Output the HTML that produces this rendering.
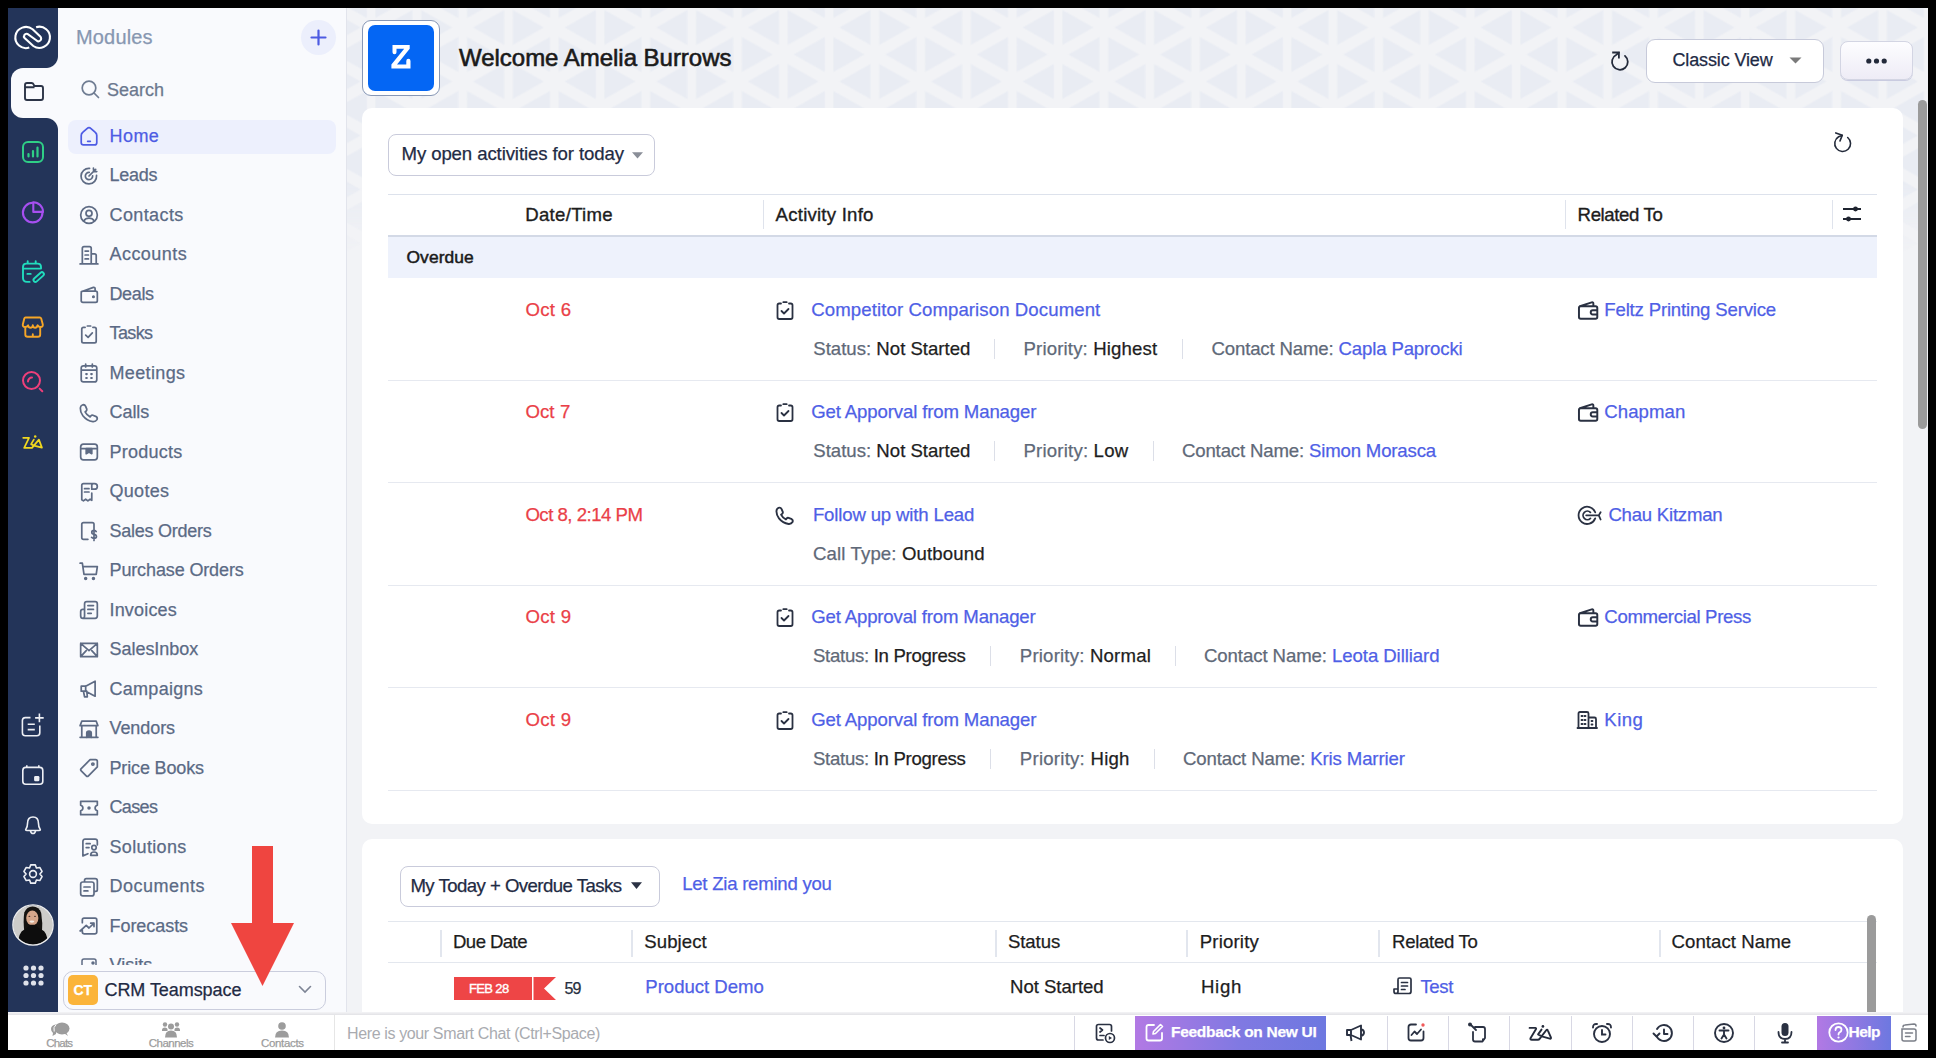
<!DOCTYPE html><html><head><meta charset="utf-8"><title>Zoho CRM</title><style>
*{box-sizing:border-box;margin:0;padding:0}
html,body{width:1937px;height:1059px;overflow:hidden;background:#fff;font-family:"Liberation Sans",sans-serif}
.a{position:absolute}
.t{position:absolute;white-space:nowrap;-webkit-text-stroke-width:0.25px}
svg{position:absolute;overflow:visible}
.med{-webkit-text-stroke:0.35px currentColor}
</style></head><body>
<div class="a" style="left:8px;top:8px;width:1920px;height:1042px;background:#f2f3f6"></div>
<svg style="left:347px;top:8px" width="1581" height="250">
<defs>
<pattern id="tri" x="-21.8" y="-7.5" width="91.6" height="54" patternUnits="userSpaceOnUse">
<path fill="#e9ecf3" d="M4.5 9.5 L4.5 44.5 L35.5 27 Z M41.5 -17.5 L41.5 17.5 L10.5 0 Z M41.5 36.5 L41.5 71.5 L10.5 54 Z M87.3 9.5 L87.3 44.5 L56.3 27 Z M50.3 -17.5 L50.3 17.5 L81.3 0 Z M50.3 36.5 L50.3 71.5 L81.3 54 Z"/>
</pattern>
<linearGradient id="fade" x1="0" y1="0" x2="0" y2="1"><stop offset="0" stop-color="#fff" stop-opacity="1"/><stop offset="0.7" stop-color="#fff" stop-opacity="1"/><stop offset="1" stop-color="#fff" stop-opacity="0"/></linearGradient>
<mask id="fm"><rect width="1581" height="250" fill="url(#fade)"/></mask>
</defs>
<rect width="1581" height="250" fill="url(#tri)" mask="url(#fm)"/>
</svg>
<div class="a" style="left:8px;top:8px;width:50px;height:1007px;background:#233459"></div>
<div class="a" style="left:11px;top:68px;width:47px;height:50px;background:#f9fafd;border-radius:12px 0 0 12px"></div>
<div class="a" style="left:46px;top:56px;width:12px;height:12px;background:radial-gradient(circle at 0 0,#233459 11.5px,#f9fafd 12.5px)"></div>
<div class="a" style="left:46px;top:118px;width:12px;height:12px;background:radial-gradient(circle at 0 100%,#233459 11.5px,#f9fafd 12.5px)"></div>
<svg style="left:12px;top:22px" width="44" height="30" viewBox="0 0 44 30">
<path d="M17.3 25.6 A10.6 10.6 0 1 1 20.6 7.3 L28.3 14.6 A2.6 2.6 0 0 1 24.6 18.5 L15.5 11.9 A2.6 2.6 0 0 0 12.6 16.0 L21.3 24.0 A10.6 10.6 0 1 0 24.1 5.2" fill="none" stroke="#fff" stroke-width="2.1" stroke-linecap="butt"/>
</svg>
<svg style="left:23px;top:81px" width="22" height="21" viewBox="0 0 22 21">
<path d="M2 4 Q2 2 4 2 L8.5 2 Q10 2 10.7 3.6 L11.3 5 L18 5 Q20 5 20 7 L20 17 Q20 19 18 19 L4 19 Q2 19 2 17 Z M2 6.2 L11.5 6.2" fill="none" stroke="#2c3447" stroke-width="1.9" stroke-linejoin="round"/>
</svg>
<svg style="left:22.0px;top:141.0px" width="22" height="22" viewBox="0 0 22 22"><rect x="1" y="1" width="20" height="20" rx="5" fill="none" stroke="#2fcf86" stroke-width="2"/><path d="M6.5 13 V15.5 M11 10 V15.5 M15.5 6.5 V15.5" stroke="#2fcf86" stroke-width="2.2" stroke-linecap="round"/></svg>
<svg style="left:20px;top:200px" width="26" height="26" viewBox="0 0 26 26"><circle cx="12.7" cy="12.6" r="9.8" fill="none" stroke="#a64ff0" stroke-width="2.1"/><path d="M13.3 2.3 V11.9 H23 A9.7 9.7 0 0 0 13.3 2.3 Z" fill="#233459" stroke="#a64ff0" stroke-width="2.1" stroke-linejoin="round"/></svg>
<svg style="left:19px;top:258px" width="28" height="28" viewBox="0 0 28 28"><path d="M10.6 23.9 H8 Q4 23.9 4 19.9 V9 Q4 5.6 7.4 5.6 H18.6 Q22 5.6 22 9 V10.6 M4 10.6 H22 M8.7 3.3 V5.6 M16.7 3.3 V5.6 M8.4 15.9 H11.7" fill="none" stroke="#21dcbd" stroke-width="1.9" stroke-linecap="round" stroke-linejoin="round"/><rect x="13.4" y="17.1" width="12.6" height="3.9" rx="1.95" transform="rotate(-42 19.7 19.05)" fill="none" stroke="#21dcbd" stroke-width="1.9"/></svg>
<svg style="left:19px;top:313px" width="28" height="28" viewBox="0 0 28 28"><path d="M6.5 4.5 H20.8 Q21.8 4.5 22.2 5.5 L23.8 11.5 Q24 13.8 21.6 14 Q19.5 14 18.6 12.3 Q18 14.8 16.1 14.8 Q14.2 14.8 13.8 12.3 Q13.4 14.8 11.5 14.8 Q9.6 14.8 9 12.3 Q8.2 14.2 6 14 Q3.6 13.8 3.8 11.5 L5.3 5.5 Q5.6 4.5 6.5 4.5 Z M6.3 14.6 V21.5 Q6.3 23.8 8.6 23.8 H19 Q21.2 23.8 21.2 21.5 V14.6 M13.8 23.8 V21.2" fill="none" stroke="#f6a627" stroke-width="1.9" stroke-linecap="round" stroke-linejoin="round"/></svg>
<svg style="left:22.0px;top:371.0px" width="22" height="22" viewBox="0 0 22 22"><circle cx="9.5" cy="9.5" r="8.5" fill="none" stroke="#ef3f7a" stroke-width="2"/><path d="M6 10.5 A4 4 0 0 1 10 6.5" fill="none" stroke="#ef3f7a" stroke-width="2" stroke-linecap="round"/><path d="M17.6 17.6 L20.3 20.3" stroke="#ef3f7a" stroke-width="2" stroke-linecap="round"/></svg>
<svg style="left:20px;top:432px" width="26" height="20" viewBox="0 0 26 20"><path d="M3.2 5.8 H9 L4.2 15.9 H12 L18.9 7.6 L21.9 15.6 L14 13.6 L11.1 12.1 L13.8 7.6" fill="none" stroke="#f0d71f" stroke-width="1.75" stroke-linejoin="round" stroke-linecap="round"/><circle cx="15.2" cy="4.5" r="1.25" fill="#f0d71f"/></svg>
<svg style="left:19px;top:710px" width="28" height="80" viewBox="0 0 28 80"><path d="M11.5 7.6 H6.4 Q3.4 7.6 3.4 10.6 V22.7 Q3.4 25.7 6.4 25.7 H17.8 Q20.8 25.7 20.8 22.7 V15.5 M8.7 14.3 H15.8 M8.7 19.6 H15.8 M20.4 3.6 V12.2 M16.1 7.9 H24.7 M6.8 57.4 H20.8 Q23.8 57.4 23.8 60.4 V71.3 Q23.8 74.3 20.8 74.3 H6.8 Q3.8 74.3 3.8 71.3 V60.4 Q3.8 57.4 6.8 57.4 Z M7.8 55.3 V58 M19.8 55.3 V58" fill="none" stroke="#eef0f5" stroke-width="1.6" stroke-linecap="butt" stroke-linejoin="round"/><rect x="15.1" y="66" width="5.3" height="5.3" rx="1.3" fill="#eef0f5"/></svg>
<svg style="left:22.0px;top:814.0px" width="22" height="22" viewBox="0 0 22 22"><path d="M4 15 Q5.5 13 5.5 9.5 Q5.5 3 11 3 Q16.5 3 16.5 9.5 Q16.5 13 18 15 Q19 16.5 17 16.5 H5 Q3 16.5 4 15 Z M8.5 17 Q9 19.5 11 19.5 Q13 19.5 13.5 17" fill="none" stroke="#eef0f5" stroke-width="1.6" stroke-linejoin="round"/></svg>
<svg style="left:20px;top:861.4px" width="26" height="26" viewBox="0 0 26 26"><path d="M9.55 7.02 L10.73 3.88 L15.27 3.88 L16.45 7.02 L16.45 7.02 L19.76 6.47 L22.04 10.41 L19.90 13.00 L19.90 13.00 L22.04 15.59 L19.76 19.53 L16.45 18.98 L16.45 18.98 L15.27 22.12 L10.73 22.12 L9.55 18.98 L9.55 18.98 L6.24 19.53 L3.96 15.59 L6.10 13.00 L6.10 13.00 L3.96 10.41 L6.24 6.47 L9.55 7.02Z" fill="none" stroke="#eef0f5" stroke-width="1.6" stroke-linejoin="round"/><circle cx="13" cy="13" r="3.4" fill="none" stroke="#eef0f5" stroke-width="1.6"/></svg>
<svg style="left:10px;top:902px" width="46" height="46" viewBox="0 0 46 46"><defs><clipPath id="av"><circle cx="23" cy="23" r="19.8"/></clipPath></defs><g clip-path="url(#av)"><rect width="46" height="46" fill="#cdccc9"/><path d="M14.6 31 Q12.8 20 14.3 10.5 Q16.8 4.4 22.6 4.5 Q29.3 4.8 31.2 11 Q32.8 20 32 31 Z" fill="#141210"/><ellipse cx="22.3" cy="16" rx="6.1" ry="7.6" fill="#d6a68a"/><path d="M26 8 Q29.5 10 29.2 16 L31 16 Q31 8 26 6.5 Z" fill="#141210"/><ellipse cx="21.9" cy="19.6" rx="2.4" ry="1.1" fill="#f3ece6"/><ellipse cx="19.4" cy="14.3" rx="1" ry="0.6" fill="#4a342a"/><ellipse cx="25" cy="14.3" rx="1" ry="0.6" fill="#4a342a"/><path d="M7.5 46 Q8 30.5 14 27.8 Q18.5 26 19.2 22.8 H25.8 Q27.3 26 31.5 27.4 Q38 29.5 38.5 46 Z" fill="#0d0d0d"/></g><circle cx="23" cy="23" r="20.1" fill="none" stroke="#eeeeee" stroke-width="1.4"/></svg>
<svg style="left:22.5px;top:964.5px" width="21" height="21" viewBox="0 0 21 21"><circle cx="3.0" cy="3.0" r="2.6" fill="#dfe2ea"/><circle cx="10.5" cy="3.0" r="2.6" fill="#dfe2ea"/><circle cx="18.0" cy="3.0" r="2.6" fill="#dfe2ea"/><circle cx="3.0" cy="10.5" r="2.6" fill="#dfe2ea"/><circle cx="10.5" cy="10.5" r="2.6" fill="#dfe2ea"/><circle cx="18.0" cy="10.5" r="2.6" fill="#dfe2ea"/><circle cx="3.0" cy="18.0" r="2.6" fill="#dfe2ea"/><circle cx="10.5" cy="18.0" r="2.6" fill="#dfe2ea"/><circle cx="18.0" cy="18.0" r="2.6" fill="#dfe2ea"/></svg>
<div class="a" style="left:58px;top:8px;width:289px;height:1007px;background:#f9fafd;border-right:1px solid #e2e4ec"></div>
<div class="t " style="left:76px;top:25.07px;font-size:20px;line-height:24px;color:#8797b1;font-weight:400;letter-spacing:0.167px;">Modules</div>
<div class="a" style="left:301px;top:20px;width:35px;height:35px;border-radius:50%;background:#eceffc"></div>
<svg style="left:310px;top:29px" width="17" height="17" viewBox="0 0 17 17"><path d="M8.5 1.5 V15.5 M1.5 8.5 H15.5" stroke="#4d5be2" stroke-width="2.2" stroke-linecap="round"/></svg>
<svg style="left:81px;top:80px" width="19" height="19" viewBox="0 0 19 19"><circle cx="8" cy="8" r="6.8" fill="none" stroke="#6f7c92" stroke-width="1.7"/><path d="M13 13 L17.5 17.5" stroke="#6f7c92" stroke-width="1.7" stroke-linecap="round"/></svg>
<div class="t " style="left:107px;top:78.76px;font-size:18px;line-height:22px;color:#6b788e;font-weight:400;letter-spacing:0.000px;">Search</div>
<div class="a" style="left:68px;top:120px;width:268px;height:34px;border-radius:8px;background:#edf0fd"></div>
<svg style="left:79px;top:126.0px" width="20" height="20" viewBox="0 0 18 18"><g fill="none" stroke="#4e5ce4" stroke-width="1.55" stroke-linecap="round" stroke-linejoin="round"><path d="M2 8.5 Q2 6.8 3.3 5.8 L7.2 2.3 Q9 0.8 10.8 2.3 L14.7 5.8 Q16 6.8 16 8.5 V15 Q16 17 14 17 H4 Q2 17 2 15 Z M7.8 13.8 H10.2"/></g></svg>
<div class="t " style="left:109.5px;top:124.76px;font-size:18px;line-height:22px;color:#4e5ce4;font-weight:400;letter-spacing:0.433px;">Home</div>
<svg style="left:79px;top:165.5px" width="20" height="20" viewBox="0 0 18 18"><g fill="none" stroke="#5e6b84" stroke-width="1.55" stroke-linecap="round" stroke-linejoin="round"><path d="M15.8 8.5 A7 7 0 1 1 9.5 2.2 M12.3 8.8 A3.3 3.3 0 1 1 9.2 5.7 M9 9 L15 3 M13 2 L13.2 4.8 L16 5"/></g></svg>
<div class="t " style="left:109.5px;top:164.26px;font-size:18px;line-height:22px;color:#5b6a85;font-weight:400;letter-spacing:-0.250px;">Leads</div>
<svg style="left:79px;top:205.0px" width="20" height="20" viewBox="0 0 18 18"><g fill="none" stroke="#5e6b84" stroke-width="1.55" stroke-linecap="round" stroke-linejoin="round"><circle cx="9" cy="9" r="7.5"/><circle cx="9" cy="7.5" r="2.7"/><path d="M4.2 14.3 Q6 11.8 9 11.8 Q12 11.8 13.8 14.3"/></g></svg>
<div class="t " style="left:109.5px;top:203.76px;font-size:18px;line-height:22px;color:#5b6a85;font-weight:400;letter-spacing:0.400px;">Contacts</div>
<svg style="left:79px;top:244.5px" width="20" height="20" viewBox="0 0 18 18"><g fill="none" stroke="#5e6b84" stroke-width="1.55" stroke-linecap="round" stroke-linejoin="round"><path d="M1 17 H17 M3 17 V3 Q3 1.5 4.5 1.5 H9.5 Q11 1.5 11 3 V17 M11 8 H14 Q15.5 8 15.5 9.5 V17 M5.5 5.5 H8.5 M5.5 9 H8.5 M5.5 12.5 H8.5"/></g></svg>
<div class="t " style="left:109.5px;top:243.26px;font-size:18px;line-height:22px;color:#5b6a85;font-weight:400;letter-spacing:0.443px;">Accounts</div>
<svg style="left:79px;top:284.0px" width="20" height="20" viewBox="0 0 18 18"><g fill="none" stroke="#5e6b84" stroke-width="1.55" stroke-linecap="round" stroke-linejoin="round"><path d="M2 7 L13 3 Q14.5 2.7 14.5 4.3 V6.5 M3.5 6.5 H15 Q16.5 6.5 16.5 8 V15 Q16.5 16.5 15 16.5 H3.5 Q2 16.5 2 15 V8 Q2 6.5 3.5 6.5 Z"/><circle cx="13" cy="11.5" r="0.6" fill="#5e6b84"/></g></svg>
<div class="t " style="left:109.5px;top:282.76px;font-size:18px;line-height:22px;color:#5b6a85;font-weight:400;letter-spacing:-0.375px;">Deals</div>
<svg style="left:79px;top:323.5px" width="20" height="20" viewBox="0 0 18 18"><g fill="none" stroke="#5e6b84" stroke-width="1.55" stroke-linecap="round" stroke-linejoin="round"><path d="M5.5 3 H4 Q2.5 3 2.5 4.5 V15.5 Q2.5 17 4 17 H14 Q15.5 17 15.5 15.5 V4.5 Q15.5 3 14 3 H12.5 M7.5 1.8 H10.5 M6 10 L8.2 12 L12 8"/></g></svg>
<div class="t " style="left:109.5px;top:322.26px;font-size:18px;line-height:22px;color:#5b6a85;font-weight:400;letter-spacing:-0.625px;">Tasks</div>
<svg style="left:79px;top:363.0px" width="20" height="20" viewBox="0 0 18 18"><g fill="none" stroke="#5e6b84" stroke-width="1.55" stroke-linecap="round" stroke-linejoin="round"><path d="M4 2.5 H14 Q16 2.5 16 4.5 V15 Q16 17 14 17 H4 Q2 17 2 15 V4.5 Q2 2.5 4 2.5 Z M2 6.5 H16 M6 1 V3.5 M12 1 V3.5"/><path d="M6.5 10 H7 M11 10 H11.5 M6.5 13.5 H7 M11 13.5 H11.5" stroke-width="2"/></g></svg>
<div class="t " style="left:109.5px;top:361.76px;font-size:18px;line-height:22px;color:#5b6a85;font-weight:400;letter-spacing:0.357px;">Meetings</div>
<svg style="left:79px;top:402.5px" width="20" height="20" viewBox="0 0 18 18"><g fill="none" stroke="#5e6b84" stroke-width="1.55" stroke-linecap="round" stroke-linejoin="round"><path d="M3 1.8 Q5 1 6 3 L7 5.5 Q7.3 6.5 6.5 7.2 L5.5 8 Q7 11 10 12.5 L10.8 11.5 Q11.5 10.7 12.5 11 L15 12 Q17 13 16.2 15 Q15 17 12.5 16.8 Q7 16 3.5 11.5 Q1 8 1.2 4.5 Q1.3 2.5 3 1.8 Z"/></g></svg>
<div class="t " style="left:109.5px;top:401.26px;font-size:18px;line-height:22px;color:#5b6a85;font-weight:400;letter-spacing:-0.050px;">Calls</div>
<svg style="left:79px;top:442.0px" width="20" height="20" viewBox="0 0 18 18"><g fill="none" stroke="#5e6b84" stroke-width="1.55" stroke-linecap="round" stroke-linejoin="round"><path d="M4 2 H14 Q16.5 2 16.5 4.5 V13.5 Q16.5 16 14 16 H4 Q1.5 16 1.5 13.5 V4.5 Q1.5 2 4 2 Z M1.5 6 H16.5"/><path d="M6.5 6 V10.5 L9 9 L11.5 10.5 V6 Z" fill="#5e6b84"/></g></svg>
<div class="t " style="left:109.5px;top:440.76px;font-size:18px;line-height:22px;color:#5b6a85;font-weight:400;letter-spacing:0.257px;">Products</div>
<svg style="left:79px;top:481.5px" width="20" height="20" viewBox="0 0 18 18"><g fill="none" stroke="#5e6b84" stroke-width="1.55" stroke-linecap="round" stroke-linejoin="round"><path d="M11.5 10 V16.5 L10 15.5 L8 17 L6 15.5 L4 17 L2.5 16 V3 Q2.5 1.5 4 1.5 H14 Q16.5 1.5 16.5 4 Q16.5 6.5 14 6.5 H11.5 V3 Q11.5 1.5 13 1.5 M5 6 H9 M5 9 H9"/></g></svg>
<div class="t " style="left:109.5px;top:480.26px;font-size:18px;line-height:22px;color:#5b6a85;font-weight:400;letter-spacing:0.300px;">Quotes</div>
<svg style="left:79px;top:521.0px" width="20" height="20" viewBox="0 0 18 18"><g fill="none" stroke="#5e6b84" stroke-width="1.55" stroke-linecap="round" stroke-linejoin="round"><path d="M8 16.5 H4 Q2.5 16.5 2.5 15 V3 Q2.5 1.5 4 1.5 H12 Q13.5 1.5 13.5 3 V7.5 M15.5 9.5 Q15 8.5 13.5 8.5 Q11.5 8.5 11.5 10.2 Q11.5 11.8 13.5 12 Q15.7 12.3 15.7 14 Q15.7 15.7 13.5 15.7 Q12 15.7 11.3 14.7 M13.5 7 V17.5"/></g></svg>
<div class="t " style="left:109.5px;top:519.76px;font-size:18px;line-height:22px;color:#5b6a85;font-weight:400;letter-spacing:-0.264px;">Sales Orders</div>
<svg style="left:79px;top:560.5px" width="20" height="20" viewBox="0 0 18 18"><g fill="none" stroke="#5e6b84" stroke-width="1.55" stroke-linecap="round" stroke-linejoin="round"><path d="M1 2 H3 L4.5 12 H15.5 L16.5 5 H3.8"/><circle cx="6" cy="15.8" r="0.8" fill="#5e6b84"/><circle cx="13" cy="15.8" r="0.8" fill="#5e6b84"/></g></svg>
<div class="t " style="left:109.5px;top:559.26px;font-size:18px;line-height:22px;color:#5b6a85;font-weight:400;letter-spacing:-0.129px;">Purchase Orders</div>
<svg style="left:79px;top:600.0px" width="20" height="20" viewBox="0 0 18 18"><g fill="none" stroke="#5e6b84" stroke-width="1.55" stroke-linecap="round" stroke-linejoin="round"><path d="M5 8.5 V3.5 Q5 1.5 7 1.5 H14.5 Q16.5 1.5 16.5 3.5 V14.5 Q16.5 16.5 14.5 16.5 H3.5 Q1.5 16.5 1.5 14.5 V10.5 Q1.5 8.5 3.5 8.5 H5 V14.5 Q5 16.5 3.5 16.5 M8 5 H13 M8 8.5 H13 M8 12 H11"/></g></svg>
<div class="t " style="left:109.5px;top:598.76px;font-size:18px;line-height:22px;color:#5b6a85;font-weight:400;letter-spacing:0.171px;">Invoices</div>
<svg style="left:79px;top:639.5px" width="20" height="20" viewBox="0 0 18 18"><g fill="none" stroke="#5e6b84" stroke-width="1.55" stroke-linecap="round" stroke-linejoin="round"><path d="M1.5 3 H16.5 V15 H1.5 Z M1.5 3 L9 9.5 L16.5 3 M1.5 15 L6.5 9.5 M16.5 15 L11.5 9.5"/></g></svg>
<div class="t " style="left:109.5px;top:638.26px;font-size:18px;line-height:22px;color:#5b6a85;font-weight:400;letter-spacing:-0.033px;">SalesInbox</div>
<svg style="left:79px;top:679.0px" width="20" height="20" viewBox="0 0 18 18"><g fill="none" stroke="#5e6b84" stroke-width="1.55" stroke-linecap="round" stroke-linejoin="round"><path d="M2 6.5 H6 L14.5 2 V15.5 L6 11 H2 Z M6 6.5 V11 M4 11 L5 16 H7.5 L7 11"/></g></svg>
<div class="t " style="left:109.5px;top:677.76px;font-size:18px;line-height:22px;color:#5b6a85;font-weight:400;letter-spacing:0.287px;">Campaigns</div>
<svg style="left:79px;top:718.5px" width="20" height="20" viewBox="0 0 18 18"><g fill="none" stroke="#5e6b84" stroke-width="1.55" stroke-linecap="round" stroke-linejoin="round"><path d="M2.5 2 H15.5 L17 6 H1 Z M2.5 6 V16.5 H15.5 V6 M1 16.5 H17"/><path d="M7 16.5 V12.5 Q7 11 9 11 Q11 11 11 12.5 V16.5" fill="#5e6b84"/></g></svg>
<div class="t " style="left:109.5px;top:717.26px;font-size:18px;line-height:22px;color:#5b6a85;font-weight:400;letter-spacing:-0.083px;">Vendors</div>
<svg style="left:79px;top:758.0px" width="20" height="20" viewBox="0 0 18 18"><g fill="none" stroke="#5e6b84" stroke-width="1.55" stroke-linecap="round" stroke-linejoin="round"><path d="M10 1.5 H15 Q16.5 1.5 16.5 3 V8 L8.5 16 Q7.5 17 6.5 16 L2 11.5 Q1 10.5 2 9.5 Z"/><circle cx="12.5" cy="5.5" r="1"/></g></svg>
<div class="t " style="left:109.5px;top:756.76px;font-size:18px;line-height:22px;color:#5b6a85;font-weight:400;letter-spacing:-0.150px;">Price Books</div>
<svg style="left:79px;top:797.5px" width="20" height="20" viewBox="0 0 18 18"><g fill="none" stroke="#5e6b84" stroke-width="1.55" stroke-linecap="round" stroke-linejoin="round"><path d="M1.5 3 H16.5 V6.5 Q14.5 7 14.5 9 Q14.5 11 16.5 11.5 V15 H1.5 V11.5 Q3.5 11 3.5 9 Q3.5 7 1.5 6.5 Z"/><circle cx="9" cy="9" r="0.8" fill="#5e6b84"/></g></svg>
<div class="t " style="left:109.5px;top:796.26px;font-size:18px;line-height:22px;color:#5b6a85;font-weight:400;letter-spacing:-0.650px;">Cases</div>
<svg style="left:79px;top:837.0px" width="20" height="20" viewBox="0 0 18 18"><g fill="none" stroke="#5e6b84" stroke-width="1.55" stroke-linecap="round" stroke-linejoin="round"><path d="M8 15 L3.5 17 V4 Q3.5 2 5.5 2 H14.5 Q16.5 2 16.5 4 V7 M6.5 6 H10 M6.5 9.5 H9"/><circle cx="13.5" cy="9.5" r="2"/><path d="M10.5 16.5 Q10.5 13.5 13.5 13.5 Q16.5 13.5 16.5 16.5 Z"/></g></svg>
<div class="t " style="left:109.5px;top:835.76px;font-size:18px;line-height:22px;color:#5b6a85;font-weight:400;letter-spacing:0.338px;">Solutions</div>
<svg style="left:79px;top:876.5px" width="20" height="20" viewBox="0 0 18 18"><g fill="none" stroke="#5e6b84" stroke-width="1.55" stroke-linecap="round" stroke-linejoin="round"><path d="M5 4.5 V3 Q5 1.5 6.5 1.5 H14.5 Q16.5 1.5 16.5 3.5 V11.5 Q16.5 13 15 13 H13.5 M3.5 4.5 H11.5 Q13.5 4.5 13.5 6.5 V15 Q13.5 17 11.5 17 H3.5 Q1.5 17 1.5 15 V6.5 Q1.5 4.5 3.5 4.5 Z M4.5 9 H10 M4.5 12.5 H8"/></g></svg>
<div class="t " style="left:109.5px;top:875.26px;font-size:18px;line-height:22px;color:#5b6a85;font-weight:400;letter-spacing:0.488px;">Documents</div>
<svg style="left:79px;top:916.0px" width="20" height="20" viewBox="0 0 18 18"><g fill="none" stroke="#5e6b84" stroke-width="1.55" stroke-linecap="round" stroke-linejoin="round"><path d="M3 6 V3.5 Q3 2 4.5 2 H14.5 Q16 2 16 3.5 V14.5 Q16 16 14.5 16 H4.5 Q3 16 3 14.5 V13 M1 13.5 L6.5 8.5 L9 10.8 L13.5 6.5 M10.5 6.5 H13.5 V9.5"/></g></svg>
<div class="t " style="left:109.5px;top:914.76px;font-size:18px;line-height:22px;color:#5b6a85;font-weight:400;letter-spacing:-0.050px;">Forecasts</div>
<div class="a" style="left:58px;top:940px;width:288px;height:25px;overflow:hidden">
<svg style="left:22px;top:16.5px" width="18" height="18" viewBox="0 0 18 18"><g fill="none" stroke="#5e6b84" stroke-width="1.5"><path d="M2 15 V4 Q2 2 4 2 H14 Q16 2 16 4 V15"/><circle cx="13" cy="6" r="1" fill="#5e6b84"/></g></svg>
<div class="t" style="left:51.5px;top:14.46px;font-size:18px;line-height:22px;color:#5b6a85">Visits</div>
</div>
<div class="a" style="left:63px;top:971px;width:263px;height:39px;border:1px solid #cacddd;border-radius:10px;background:#f9fafd"></div>
<div class="a" style="left:68px;top:975px;width:30px;height:30px;border-radius:5px;background:#fbb43a"></div>
<div class="t " style="left:73.5px;top:981.65px;font-size:14px;line-height:17px;color:#fff;font-weight:700;">CT</div>
<div class="t " style="left:104.5px;top:978.76px;font-size:18px;line-height:22px;color:#1f2a44;font-weight:400;letter-spacing:-0.067px;">CRM Teamspace</div>
<svg style="left:298px;top:985px" width="14" height="9" viewBox="0 0 14 9"><path d="M1.5 1.5 L7 7 L12.5 1.5" fill="none" stroke="#7d8495" stroke-width="1.6" stroke-linecap="round"/></svg>
<svg style="left:231px;top:846px" width="63" height="140" viewBox="0 0 63 140"><path d="M21 0 H42 V77 H63 L31.5 140 L0 77 H21 Z" fill="#ef4540"/></svg>
<div class="a" style="left:362px;top:20px;width:78px;height:76px;border:1px solid #8797b5;border-radius:9px;background:#fff"></div>
<div class="a" style="left:368px;top:25px;width:66px;height:66px;border-radius:7px;background:#0466f4"></div>
<svg style="left:390px;top:44px" width="22" height="26" viewBox="0 0 22 26"><path d="M2.5 1 H19.7 V4.8 L7 20.6 H16.3 V16.9 A2.1 2.1 0 0 1 20.5 16.9 V24.5 H1.4 V20.6 L14.2 4.8 H6.5 V8.2 A2 2 0 0 1 2.5 8.2 Z" fill="#fff"/></svg>
<div class="t " style="left:459px;top:43.18px;font-size:24px;line-height:29px;color:#1a1a1a;font-weight:400;letter-spacing:-0.024px;-webkit-text-stroke:0.6px #1a1a1a;">Welcome Amelia Burrows</div>
<svg style="left:1605px;top:46px" width="30" height="30" viewBox="0 0 30 30"><path d="M19.98 9.85 A7.9 7.9 0 1 1 11.4 8.8 L13.9 6.6" fill="none" stroke="#232a3a" stroke-width="1.8" stroke-linecap="round"/><path d="M7.2 6.5 H13.9 V12.6" fill="none" stroke="#232a3a" stroke-width="1.8" stroke-linecap="butt" stroke-linejoin="miter"/></svg>
<div class="a" style="left:1646px;top:39px;width:178px;height:44px;border:1px solid #c7cada;border-radius:9px;background:#fff"></div>
<div class="t " style="left:1672.5px;top:48.76px;font-size:18px;line-height:22px;color:#1e2a45;font-weight:400;letter-spacing:-0.136px;">Classic View</div>
<svg style="left:1789px;top:57px" width="13" height="7" viewBox="0 0 13 7"><path d="M0.5 0.5 H12.5 L6.5 6.5 Z" fill="#7a7a7a"/></svg>
<div class="a" style="left:1840px;top:41px;width:73px;height:39px;border:1px solid #d3d5e3;border-radius:8px;background:linear-gradient(#fdfdff,#eeecf6);box-shadow:0 1px 0 #c9cbe0"></div>
<svg style="left:1866px;top:58px" width="21" height="6" viewBox="0 0 21 6"><circle cx="2.8" cy="3" r="2.6" fill="#232a3a"/><circle cx="10.5" cy="3" r="2.6" fill="#232a3a"/><circle cx="18.2" cy="3" r="2.6" fill="#232a3a"/></svg>
<div class="a" style="left:1918px;top:100px;width:9px;height:329px;border-radius:5px;background:#9b9b9b"></div>
<div class="a" style="left:362px;top:108px;width:1541px;height:716px;border-radius:10px;background:#fff"></div>
<div class="a" style="left:388px;top:134px;width:267px;height:42px;border:1px solid #c9cbdb;border-radius:8px;background:#fff"></div>
<div class="t " style="left:401.5px;top:143.16px;font-size:18.6px;line-height:22px;color:#1f2b44;font-weight:400;letter-spacing:-0.104px;">My open activities for today</div>
<svg style="left:632px;top:152px" width="11" height="7" viewBox="0 0 11 7"><path d="M0 0.2 H11 L5.5 6.4 Z" fill="#8a8e98"/></svg>
<svg style="left:1827px;top:127px" width="30" height="30" viewBox="0 0 30 30"><path d="M20.7 10.5 A7.9 7.9 0 1 1 11.6 9.8 L15.1 8.4" fill="none" stroke="#232a3a" stroke-width="1.6" stroke-linecap="round"/><path d="M8.8 5.9 L15.3 8.2 L13.0 13.9" fill="none" stroke="#232a3a" stroke-width="1.6" stroke-linecap="round" stroke-linejoin="round"/></svg>
<div class="a" style="left:388px;top:194px;width:1489px;height:1px;background:#dde2ec"></div>
<div class="a" style="left:388px;top:235px;width:1489px;height:2px;background:#d3d9e6"></div>
<div class="a" style="left:763px;top:200px;width:1px;height:29px;background:#dfe3ec"></div>
<div class="a" style="left:1565px;top:200px;width:1px;height:29px;background:#dfe3ec"></div>
<div class="a" style="left:1832px;top:200px;width:1px;height:29px;background:#dfe3ec"></div>
<div class="t med" style="left:525.2px;top:203.56px;font-size:18.6px;line-height:22px;color:#1d1d1d;font-weight:400;letter-spacing:0.300px;">Date/Time</div>
<div class="t med" style="left:775.6px;top:203.56px;font-size:18.6px;line-height:22px;color:#1d1d1d;font-weight:400;letter-spacing:0.225px;">Activity Info</div>
<div class="t med" style="left:1577.6px;top:203.56px;font-size:18.6px;line-height:22px;color:#1d1d1d;font-weight:400;letter-spacing:-0.378px;">Related To</div>
<svg style="left:1842px;top:206px" width="20" height="17" viewBox="0 0 20 17"><path d="M1 3 H19 M1 13 H19" stroke="#1f2430" stroke-width="1.9"/><circle cx="13.5" cy="3" r="2.4" fill="#1f2430"/><circle cx="6.5" cy="13" r="2.4" fill="#1f2430"/></svg>
<div class="a" style="left:388px;top:237px;width:1489px;height:41px;background:#eef2fc"></div>
<div class="t " style="left:406.5px;top:247.47px;font-size:17.4px;line-height:21px;color:#1a1a1a;font-weight:400;letter-spacing:0.083px;-webkit-text-stroke:0.5px #1a1a1a;">Overdue</div>
<div class="t " style="left:525.4px;top:299.16px;font-size:18.6px;line-height:22px;color:#ea3f48;font-weight:400;letter-spacing:0.325px;">Oct 6</div>
<svg style="left:776px;top:301px" width="20" height="20" viewBox="0 0 20 20"><path d="M5 2.5 H3.2 Q1.5 2.5 1.5 4.2 V16.3 Q1.5 18 3.2 18 H14.8 Q16.5 18 16.5 16.3 V4.2 Q16.5 2.5 14.8 2.5 H13 M7.3 1.2 H10.7 M5.5 10 L8 12.5 L12.5 8" fill="none" stroke="#2a3142" stroke-width="1.8" stroke-linecap="round" stroke-linejoin="round"/></svg>
<div class="t " style="left:811.3px;top:299.16px;font-size:18.6px;line-height:22px;color:#4f5fe6;font-weight:400;letter-spacing:0.093px;">Competitor Comparison Document</div>
<div class="t " style="left:813.3px;top:337.56px;font-size:18.6px;line-height:22px;color:#1d1d1d;font-weight:400;letter-spacing:0.000px;"><span style="color:#5f6978">Status:</span> <span style="color:#1e1e1e">Not Started</span></div>
<div class="a" style="left:994px;top:339px;width:1px;height:20px;background:#dcdfe8"></div>
<div class="t " style="left:1023.5px;top:337.56px;font-size:18.6px;line-height:22px;color:#1d1d1d;font-weight:400;letter-spacing:0.156px;"><span style="color:#5f6978">Priority:</span> <span style="color:#1e1e1e">Highest</span></div>
<div class="a" style="left:1182px;top:339px;width:1px;height:20px;background:#dcdfe8"></div>
<div class="t " style="left:1211.5px;top:337.56px;font-size:18.6px;line-height:22px;color:#1d1d1d;font-weight:400;letter-spacing:-0.152px;"><span style="color:#5f6978">Contact Name:</span> <span style="color:#4f5fe6">Capla Paprocki</span></div>
<svg style="left:1577px;top:299.5px" width="24" height="24" viewBox="0 0 22 22"><path d="M2 6 L13.5 2.2 Q15 1.8 15 3.4 V5.8 M3.4 5.8 H17 Q18.6 5.8 18.6 7.4 V15.6 Q18.6 17.2 17 17.2 H3.4 Q1.8 17.2 1.8 15.6 V7.4 Q1.8 5.8 3.4 5.8 Z M18.6 9.3 H14.5 Q12.6 9.3 12.6 11.3 Q12.6 13.3 14.5 13.3 H18.6" fill="none" stroke="#2a3142" stroke-width="1.8" stroke-linejoin="round"/></svg>
<div class="t " style="left:1604.3px;top:299.16px;font-size:18.6px;line-height:22px;color:#4f5fe6;font-weight:400;letter-spacing:-0.181px;">Feltz Printing Service</div>
<div class="a" style="left:388px;top:380px;width:1489px;height:1px;background:#e6e9f0"></div>
<div class="t " style="left:525.4px;top:401.16px;font-size:18.6px;line-height:22px;color:#ea3f48;font-weight:400;letter-spacing:0.100px;">Oct 7</div>
<svg style="left:776px;top:403px" width="20" height="20" viewBox="0 0 20 20"><path d="M5 2.5 H3.2 Q1.5 2.5 1.5 4.2 V16.3 Q1.5 18 3.2 18 H14.8 Q16.5 18 16.5 16.3 V4.2 Q16.5 2.5 14.8 2.5 H13 M7.3 1.2 H10.7 M5.5 10 L8 12.5 L12.5 8" fill="none" stroke="#2a3142" stroke-width="1.8" stroke-linecap="round" stroke-linejoin="round"/></svg>
<div class="t " style="left:811.3px;top:401.16px;font-size:18.6px;line-height:22px;color:#4f5fe6;font-weight:400;letter-spacing:-0.138px;">Get Apporval from Manager</div>
<div class="t " style="left:813.3px;top:439.56px;font-size:18.6px;line-height:22px;color:#1d1d1d;font-weight:400;letter-spacing:0.000px;"><span style="color:#5f6978">Status:</span> <span style="color:#1e1e1e">Not Started</span></div>
<div class="a" style="left:994px;top:441px;width:1px;height:20px;background:#dcdfe8"></div>
<div class="t " style="left:1023.5px;top:439.56px;font-size:18.6px;line-height:22px;color:#1d1d1d;font-weight:400;letter-spacing:0.192px;"><span style="color:#5f6978">Priority:</span> <span style="color:#1e1e1e">Low</span></div>
<div class="a" style="left:1153px;top:441px;width:1px;height:20px;background:#dcdfe8"></div>
<div class="t " style="left:1182px;top:439.56px;font-size:18.6px;line-height:22px;color:#1d1d1d;font-weight:400;letter-spacing:-0.162px;"><span style="color:#5f6978">Contact Name:</span> <span style="color:#4f5fe6">Simon Morasca</span></div>
<svg style="left:1577px;top:401.5px" width="24" height="24" viewBox="0 0 22 22"><path d="M2 6 L13.5 2.2 Q15 1.8 15 3.4 V5.8 M3.4 5.8 H17 Q18.6 5.8 18.6 7.4 V15.6 Q18.6 17.2 17 17.2 H3.4 Q1.8 17.2 1.8 15.6 V7.4 Q1.8 5.8 3.4 5.8 Z M18.6 9.3 H14.5 Q12.6 9.3 12.6 11.3 Q12.6 13.3 14.5 13.3 H18.6" fill="none" stroke="#2a3142" stroke-width="1.8" stroke-linejoin="round"/></svg>
<div class="t " style="left:1604.3px;top:401.16px;font-size:18.6px;line-height:22px;color:#4f5fe6;font-weight:400;letter-spacing:0.050px;">Chapman</div>
<div class="a" style="left:388px;top:482px;width:1489px;height:1px;background:#e6e9f0"></div>
<div class="t " style="left:525.4px;top:504.16px;font-size:18.6px;line-height:22px;color:#ea3f48;font-weight:400;letter-spacing:-0.492px;">Oct 8, 2:14 PM</div>
<svg style="left:775px;top:505.5px" width="21" height="21" viewBox="0 0 20 20"><path d="M3.3 1.8 Q5.3 1 6.3 3 L7.4 5.6 Q7.7 6.6 6.9 7.3 L5.8 8.2 Q7.3 11.3 10.4 12.8 L11.2 11.8 Q11.9 11 12.9 11.3 L15.5 12.3 Q17.5 13.3 16.7 15.3 Q15.5 17.3 13 17.1 Q7.3 16.3 3.8 11.8 Q1.2 8.3 1.4 4.7 Q1.5 2.6 3.3 1.8 Z" fill="none" stroke="#2a3142" stroke-width="1.8" stroke-linejoin="round"/></svg>
<div class="t " style="left:812.9px;top:504.16px;font-size:18.6px;line-height:22px;color:#4f5fe6;font-weight:400;letter-spacing:-0.161px;">Follow up with Lead</div>
<div class="t " style="left:813px;top:542.56px;font-size:18.6px;line-height:22px;color:#1d1d1d;font-weight:400;letter-spacing:0.128px;"><span style="color:#5f6978">Call Type:</span> <span style="color:#1e1e1e">Outbound</span></div>
<svg style="left:1572px;top:500px" width="36" height="30" viewBox="0 0 36 30"><path d="M23.2 12.3 A8.6 8.6 0 1 0 23.2 18.4 M18.4 12.3 A4.3 4.3 0 1 0 18.4 18.4 M14.2 15.35 H26.6 M28.6 12.2 L26.8 15.35 L28.6 19.5" fill="none" stroke="#2a3142" stroke-width="1.8" stroke-linecap="round" stroke-linejoin="round"/></svg>
<div class="t " style="left:1608.4px;top:504.16px;font-size:18.6px;line-height:22px;color:#4f5fe6;font-weight:400;letter-spacing:-0.236px;">Chau Kitzman</div>
<div class="a" style="left:388px;top:585px;width:1489px;height:1px;background:#e6e9f0"></div>
<div class="t " style="left:525.4px;top:606.16px;font-size:18.6px;line-height:22px;color:#ea3f48;font-weight:400;letter-spacing:0.325px;">Oct 9</div>
<svg style="left:776px;top:608px" width="20" height="20" viewBox="0 0 20 20"><path d="M5 2.5 H3.2 Q1.5 2.5 1.5 4.2 V16.3 Q1.5 18 3.2 18 H14.8 Q16.5 18 16.5 16.3 V4.2 Q16.5 2.5 14.8 2.5 H13 M7.3 1.2 H10.7 M5.5 10 L8 12.5 L12.5 8" fill="none" stroke="#2a3142" stroke-width="1.8" stroke-linecap="round" stroke-linejoin="round"/></svg>
<div class="t " style="left:811.3px;top:606.16px;font-size:18.6px;line-height:22px;color:#4f5fe6;font-weight:400;letter-spacing:-0.167px;">Get Approval from Manager</div>
<div class="t " style="left:813px;top:644.56px;font-size:18.6px;line-height:22px;color:#1d1d1d;font-weight:400;letter-spacing:-0.294px;"><span style="color:#5f6978">Status:</span> <span style="color:#1e1e1e">In Progress</span></div>
<div class="a" style="left:990px;top:646px;width:1px;height:20px;background:#dcdfe8"></div>
<div class="t " style="left:1019.8px;top:644.56px;font-size:18.6px;line-height:22px;color:#1d1d1d;font-weight:400;letter-spacing:0.193px;"><span style="color:#5f6978">Priority:</span> <span style="color:#1e1e1e">Normal</span></div>
<div class="a" style="left:1175px;top:646px;width:1px;height:20px;background:#dcdfe8"></div>
<div class="t " style="left:1204px;top:644.56px;font-size:18.6px;line-height:22px;color:#1d1d1d;font-weight:400;letter-spacing:-0.081px;"><span style="color:#5f6978">Contact Name:</span> <span style="color:#4f5fe6">Leota Dilliard</span></div>
<svg style="left:1577px;top:606.5px" width="24" height="24" viewBox="0 0 22 22"><path d="M2 6 L13.5 2.2 Q15 1.8 15 3.4 V5.8 M3.4 5.8 H17 Q18.6 5.8 18.6 7.4 V15.6 Q18.6 17.2 17 17.2 H3.4 Q1.8 17.2 1.8 15.6 V7.4 Q1.8 5.8 3.4 5.8 Z M18.6 9.3 H14.5 Q12.6 9.3 12.6 11.3 Q12.6 13.3 14.5 13.3 H18.6" fill="none" stroke="#2a3142" stroke-width="1.8" stroke-linejoin="round"/></svg>
<div class="t " style="left:1604.3px;top:606.16px;font-size:18.6px;line-height:22px;color:#4f5fe6;font-weight:400;letter-spacing:-0.320px;">Commercial Press</div>
<div class="a" style="left:388px;top:687px;width:1489px;height:1px;background:#e6e9f0"></div>
<div class="t " style="left:525.4px;top:709.16px;font-size:18.6px;line-height:22px;color:#ea3f48;font-weight:400;letter-spacing:0.325px;">Oct 9</div>
<svg style="left:776px;top:711px" width="20" height="20" viewBox="0 0 20 20"><path d="M5 2.5 H3.2 Q1.5 2.5 1.5 4.2 V16.3 Q1.5 18 3.2 18 H14.8 Q16.5 18 16.5 16.3 V4.2 Q16.5 2.5 14.8 2.5 H13 M7.3 1.2 H10.7 M5.5 10 L8 12.5 L12.5 8" fill="none" stroke="#2a3142" stroke-width="1.8" stroke-linecap="round" stroke-linejoin="round"/></svg>
<div class="t " style="left:811.3px;top:709.16px;font-size:18.6px;line-height:22px;color:#4f5fe6;font-weight:400;letter-spacing:-0.138px;">Get Apporval from Manager</div>
<div class="t " style="left:813px;top:747.56px;font-size:18.6px;line-height:22px;color:#1d1d1d;font-weight:400;letter-spacing:-0.294px;"><span style="color:#5f6978">Status:</span> <span style="color:#1e1e1e">In Progress</span></div>
<div class="a" style="left:990px;top:749px;width:1px;height:20px;background:#dcdfe8"></div>
<div class="t " style="left:1019.8px;top:747.56px;font-size:18.6px;line-height:22px;color:#1d1d1d;font-weight:400;letter-spacing:0.246px;"><span style="color:#5f6978">Priority:</span> <span style="color:#1e1e1e">High</span></div>
<div class="a" style="left:1154px;top:749px;width:1px;height:20px;background:#dcdfe8"></div>
<div class="t " style="left:1183px;top:747.56px;font-size:18.6px;line-height:22px;color:#1d1d1d;font-weight:400;letter-spacing:-0.136px;"><span style="color:#5f6978">Contact Name:</span> <span style="color:#4f5fe6">Kris Marrier</span></div>
<svg style="left:1576px;top:710px" width="22" height="22" viewBox="0 0 22 22"><path d="M1.5 18 H21 M2.5 18 V3.5 Q2.5 2 4 2 H11 Q12.5 2 12.5 3.5 V18 M12.5 7.5 H18.5 Q20 7.5 20 9 V18 M5.5 6 H6.5 M8.5 6 H9.5 M5.5 10 H6.5 M8.5 10 H9.5 M5.5 14 H6.5 M8.5 14 H9.5 M15.5 11 H16.5 M15.5 14.5 H16.5" fill="none" stroke="#2a3142" stroke-width="1.8" stroke-linecap="round"/></svg>
<div class="t " style="left:1604.3px;top:709.16px;font-size:18.6px;line-height:22px;color:#4f5fe6;font-weight:400;letter-spacing:0.433px;">King</div>
<div class="a" style="left:388px;top:790px;width:1489px;height:1px;background:#e6e9f0"></div>
<div class="a" style="left:362px;top:839px;width:1541px;height:300px;border-radius:10px;background:#fff"></div>
<div class="a" style="left:400px;top:866px;width:260px;height:41px;border:1px solid #c9cbdb;border-radius:8px;background:#fff"></div>
<div class="t " style="left:410.4px;top:874.96px;font-size:18.6px;line-height:22px;color:#1f2b44;font-weight:400;letter-spacing:-0.539px;">My Today + Overdue Tasks</div>
<svg style="left:631px;top:882px" width="11" height="8" viewBox="0 0 11 8"><path d="M0 0.2 H11 L5.5 7 Z" fill="#2b3244"/></svg>
<div class="t " style="left:682.2px;top:872.56px;font-size:18.6px;line-height:22px;color:#4f5fe6;font-weight:400;letter-spacing:-0.253px;">Let Zia remind you</div>
<div class="a" style="left:388px;top:921px;width:1489px;height:1px;background:#e3e7ee"></div>
<div class="a" style="left:388px;top:962px;width:1489px;height:1px;background:#e3e7ee"></div>
<div class="a" style="left:440px;top:930px;width:2px;height:27px;background:#e2e6ee"></div>
<div class="a" style="left:631px;top:930px;width:2px;height:27px;background:#e2e6ee"></div>
<div class="a" style="left:995px;top:930px;width:2px;height:27px;background:#e2e6ee"></div>
<div class="a" style="left:1186px;top:930px;width:2px;height:27px;background:#e2e6ee"></div>
<div class="a" style="left:1378px;top:930px;width:2px;height:27px;background:#e2e6ee"></div>
<div class="a" style="left:1659px;top:930px;width:2px;height:27px;background:#e2e6ee"></div>
<div class="t " style="left:453px;top:930.56px;font-size:18.6px;line-height:22px;color:#1d1d1d;font-weight:400;letter-spacing:-0.571px;">Due Date</div>
<div class="t " style="left:644.3px;top:930.56px;font-size:18.6px;line-height:22px;color:#1d1d1d;font-weight:400;letter-spacing:0.067px;">Subject</div>
<div class="t " style="left:1008px;top:930.56px;font-size:18.6px;line-height:22px;color:#1d1d1d;font-weight:400;letter-spacing:-0.100px;">Status</div>
<div class="t " style="left:1199.7px;top:930.56px;font-size:18.6px;line-height:22px;color:#1d1d1d;font-weight:400;letter-spacing:0.186px;">Priority</div>
<div class="t " style="left:1392px;top:930.56px;font-size:18.6px;line-height:22px;color:#1d1d1d;font-weight:400;letter-spacing:-0.300px;">Related To</div>
<div class="t " style="left:1671.5px;top:930.56px;font-size:18.6px;line-height:22px;color:#1d1d1d;font-weight:400;letter-spacing:0.064px;">Contact Name</div>
<svg style="left:454px;top:977px" width="104" height="23" viewBox="0 0 104 23"><rect x="0" y="0" width="78" height="23" fill="#ee4546"/><path d="M79.5 0 H102 L90 11.5 L102 23 H79.5 Z" fill="#ee4546"/></svg>
<div class="t med" style="left:469px;top:981.00px;font-size:13px;line-height:16px;color:#fff;font-weight:400;letter-spacing:-0.640px;">FEB 28</div>
<div class="t " style="left:564.6px;top:978.96px;font-size:16px;line-height:19px;color:#263040;font-weight:400;letter-spacing:-1.000px;">59</div>
<div class="t " style="left:645.3px;top:975.56px;font-size:18.6px;line-height:22px;color:#4f5fe6;font-weight:400;letter-spacing:-0.027px;">Product Demo</div>
<div class="t " style="left:1010px;top:975.56px;font-size:18.6px;line-height:22px;color:#1d1d1d;font-weight:400;letter-spacing:-0.040px;">Not Started</div>
<div class="t " style="left:1201px;top:975.56px;font-size:18.6px;line-height:22px;color:#1d1d1d;font-weight:400;letter-spacing:0.667px;">High</div>
<svg style="left:1393px;top:976px" width="20" height="20" viewBox="0 0 20 20"><path d="M5 4 V15.5 Q5 17.5 3 17.5 Q1 17.5 1 15.5 V13 H5 M3 17.5 H16 Q18 17.5 18 15.5 V3.5 Q18 2 16.5 2 H6.5 Q5 2 5 3.5 M8.5 6.5 H14.5 M8.5 10 H14.5 M8.5 13.5 H12" fill="none" stroke="#2a3142" stroke-width="1.7" stroke-linecap="round" stroke-linejoin="round"/></svg>
<div class="t " style="left:1420.4px;top:975.56px;font-size:18.6px;line-height:22px;color:#4f5fe6;font-weight:400;letter-spacing:-0.367px;">Test</div>
<div class="a" style="left:1867px;top:915px;width:9px;height:110px;border-radius:5px;background:#9b9b9b"></div>
<div class="a" style="left:8px;top:1012px;width:1920px;height:3px;background:linear-gradient(#f4f4f6,#e2e2e6)"></div>
<div class="a" style="left:8px;top:1015px;width:1920px;height:35px;background:#fff"></div>
<div class="a" style="left:334px;top:1015px;width:1px;height:35px;background:#e6e6e6"></div>
<svg style="left:50px;top:1022px" width="20" height="17" viewBox="0 0 20 17"><path d="M6 2.5 Q1 3 1 7 Q1 9.5 3 11 L2.5 14 L6 12 " fill="#9c9c9c"/><ellipse cx="12" cy="6.5" rx="7.5" ry="6" fill="#9c9c9c"/><path d="M14.5 11.5 L18 14 L16 10" fill="#9c9c9c"/><path d="M5.8 3 Q3 5 4.2 9.5" fill="none" stroke="#fff" stroke-width="1"/></svg>
<div class="t " style="left:46.3px;top:1036.02px;font-size:11.5px;line-height:14px;color:#9c9c9c;font-weight:400;letter-spacing:-0.825px;">Chats</div>
<svg style="left:162px;top:1022px" width="18" height="16" viewBox="0 0 18 16"><circle cx="3" cy="2.5" r="2.2" fill="#9c9c9c"/><circle cx="15" cy="2.5" r="2.2" fill="#9c9c9c"/><circle cx="9" cy="4.5" r="3" fill="#9c9c9c"/><path d="M0 8 Q0 5.5 3 5.5 Q5 5.5 5.5 7 V9 H0 Z M18 8 Q18 5.5 15 5.5 Q13 5.5 12.5 7 V9 H18 Z M3 15.5 Q3 8.5 9 8.5 Q15 8.5 15 15.5 Z" fill="#9c9c9c"/></svg>
<div class="t " style="left:148.8px;top:1036.02px;font-size:11.5px;line-height:14px;color:#9c9c9c;font-weight:400;letter-spacing:-0.514px;">Channels</div>
<svg style="left:274px;top:1022px" width="16" height="16" viewBox="0 0 16 16"><circle cx="8" cy="4" r="3.8" fill="#9c9c9c"/><path d="M1 15.5 Q1 8.5 8 8.5 Q15 8.5 15 15.5 Z" fill="#9c9c9c"/></svg>
<div class="t " style="left:261px;top:1036.02px;font-size:11.5px;line-height:14px;color:#9c9c9c;font-weight:400;letter-spacing:-0.329px;">Contacts</div>
<div class="t " style="left:347px;top:1024.46px;font-size:16px;line-height:19px;color:#a9abb0;font-weight:400;letter-spacing:-0.371px;-webkit-text-stroke-width:0;">Here is your Smart Chat (Ctrl+Space)</div>
<div class="a" style="left:1074px;top:1016px;width:1px;height:34px;background:#d8d8e4"></div>
<div class="a" style="left:1387px;top:1016px;width:1px;height:34px;background:#d8d8e4"></div>
<div class="a" style="left:1448px;top:1016px;width:1px;height:34px;background:#d8d8e4"></div>
<div class="a" style="left:1509px;top:1016px;width:1px;height:34px;background:#d8d8e4"></div>
<div class="a" style="left:1571px;top:1016px;width:1px;height:34px;background:#d8d8e4"></div>
<div class="a" style="left:1632px;top:1016px;width:1px;height:34px;background:#d8d8e4"></div>
<div class="a" style="left:1693px;top:1016px;width:1px;height:34px;background:#d8d8e4"></div>
<div class="a" style="left:1754px;top:1016px;width:1px;height:34px;background:#d8d8e4"></div>
<div class="a" style="left:1135px;top:1016px;width:191px;height:34px;background:linear-gradient(90deg,#b279e4,#8079e2 55%,#6d78e0)"></div>
<svg style="left:1145px;top:1023px" width="19" height="19" viewBox="0 0 19 19"><path d="M9 2 H3.5 Q1.5 2 1.5 4 V15.5 Q1.5 17.5 3.5 17.5 H15 Q17 17.5 17 15.5 V10" fill="none" stroke="#fff" stroke-width="1.8" stroke-linecap="round"/><path d="M8 11 L8.5 8.5 L15.5 1.5 L17.5 3.5 L10.5 10.5 Z" fill="none" stroke="#fff" stroke-width="1.6" stroke-linejoin="round"/></svg>
<div class="t " style="left:1171px;top:1022.13px;font-size:15.5px;line-height:19px;color:#fff;font-weight:700;letter-spacing:-0.294px;">Feedback on New UI</div>
<div class="a" style="left:1817px;top:1016px;width:74px;height:34px;background:linear-gradient(90deg,#b279e4,#6d78e0)"></div>
<svg style="left:1828px;top:1022px" width="21" height="21" viewBox="0 0 21 21"><circle cx="10.5" cy="10.5" r="9.2" fill="none" stroke="#fff" stroke-width="1.8"/><path d="M7.5 8 Q7.5 5 10.5 5 Q13.5 5 13.5 7.8 Q13.5 9.5 11.5 10.5 Q10.5 11 10.5 12.5" fill="none" stroke="#fff" stroke-width="1.8" stroke-linecap="round"/><circle cx="10.5" cy="15.5" r="1.1" fill="#fff"/></svg>
<div class="t " style="left:1848.6px;top:1022.13px;font-size:15.5px;line-height:19px;color:#fff;font-weight:700;letter-spacing:-0.533px;">Help</div>
<svg style="left:1094.0px;top:1022.0px" width="22" height="22" viewBox="0 0 22 22"><path d="M9 18 H4.5 Q2.5 18 2.5 16 V4.5 Q2.5 2.5 4.5 2.5 H15.5 Q17.5 2.5 17.5 4.5 V9 M6 6 L8.5 8 L6 10 M6 13.5 H10" fill="none" stroke="#2a3142" stroke-width="1.7" stroke-linecap="round" stroke-linejoin="round"/><circle cx="16" cy="16" r="4.5" fill="none" stroke="#2a3142" stroke-width="1.7"/><path d="M14.8 14 L18 16 L14.8 18 Z" fill="#2a3142"/></svg>
<svg style="left:1345.0px;top:1022.0px" width="22" height="22" viewBox="0 0 22 22"><path d="M2 8 H6 L16 3.5 V17.5 L6 13 H2 Z M6 8 V13 M16 7 Q19 8 19 10.5 Q19 13 16 14 M5.5 13 L6.5 19" fill="none" stroke="#2a3142" stroke-width="1.9" stroke-linejoin="round"/></svg>
<svg style="left:1406.0px;top:1022.0px" width="22" height="22" viewBox="0 0 22 22"><path d="M10 2.5 H5 Q2.5 2.5 2.5 5 V16 Q2.5 18.5 5 18.5 H15 Q17.5 18.5 17.5 16 V9.5 M5.5 13 L8.5 9.5 L11 12 L15 7.5" fill="none" stroke="#2a3142" stroke-width="1.8" stroke-linecap="round" stroke-linejoin="round"/><circle cx="17" cy="3" r="1.7" fill="#f05a5a"/></svg>
<svg style="left:1467.0px;top:1022.0px" width="22" height="22" viewBox="0 0 22 22"><path d="M8 5 H16 Q18 5 18 7 V16 L15.5 19.5 H8 Q6 19.5 6 17.5 V10 M3.5 2.5 L9 8" fill="none" stroke="#2a3142" stroke-width="1.8" stroke-linecap="round" stroke-linejoin="round"/><circle cx="3" cy="2.5" r="2" fill="#2a3142"/><path d="M15 19.5 V16.5 H18 Z" fill="#2a3142"/></svg>
<svg style="left:1520px;top:1018px" width="40" height="30" viewBox="0 0 40 30"><path d="M9.6 9.9 H15.2 Q16.6 10 15.9 11.3 L10.5 20.2 Q9.9 21.8 11.8 21.8 H17.8 Q19 21.8 19.8 20.6 L26 12.5 Q27.3 10.8 28 12.8 L30.9 19.3 Q31.4 21 29.8 20.6 L21.8 18.4 L18.1 16.4 L21.5 11.6" fill="none" stroke="#232a3a" stroke-width="1.9" stroke-linejoin="round" stroke-linecap="round"/><circle cx="22.9" cy="8.4" r="1.35" fill="#232a3a"/></svg>
<svg style="left:1591.0px;top:1022.0px" width="22" height="22" viewBox="0 0 22 22"><circle cx="11" cy="12" r="8" fill="none" stroke="#2a3142" stroke-width="1.9"/><path d="M11 8 V12.5 H14.5 M2 5.5 Q2 1.5 6 2 M20 5.5 Q20 1.5 16 2" fill="none" stroke="#2a3142" stroke-width="1.9" stroke-linecap="round"/></svg>
<svg style="left:1652.0px;top:1022.0px" width="22" height="22" viewBox="0 0 22 22"><path d="M4.5 14 A8 8 0 1 0 5 7" fill="none" stroke="#2a3142" stroke-width="1.9" stroke-linecap="round"/><path d="M1.5 11.5 L4.5 14.5 L7.5 11.5 M12 7.5 V12 H15.5" fill="none" stroke="#2a3142" stroke-width="1.9" stroke-linecap="round" stroke-linejoin="round"/></svg>
<svg style="left:1713.0px;top:1022.0px" width="22" height="22" viewBox="0 0 22 22"><circle cx="11" cy="11" r="9" fill="none" stroke="#2a3142" stroke-width="1.9"/><circle cx="11" cy="6" r="1.4" fill="#2a3142"/><path d="M6.5 8.5 H15.5 M11 9 V12.5 L8.5 16.5 M11 12.5 L13.5 16.5" fill="none" stroke="#2a3142" stroke-width="1.9" stroke-linecap="round"/></svg>
<svg style="left:1774.0px;top:1022.0px" width="22" height="22" viewBox="0 0 22 22"><rect x="7.5" y="1" width="7" height="13" rx="3.5" fill="#2a3142"/><path d="M4.5 10 Q4.5 17 11 17 Q17.5 17 17.5 10 M11 17 V20.5 M8 20.5 H14" fill="none" stroke="#2a3142" stroke-width="1.8" stroke-linecap="round"/></svg>
<svg style="left:1899.0px;top:1023.0px" width="20" height="20" viewBox="0 0 20 20"><path d="M4 4 Q4 2 6 2 L15 1 Q17 1 17 3 M3 6 H15 Q17 6 17 8 V16 Q17 18 15 18 H5 Q3 18 3 16 Z M6.5 10 H13.5 M6.5 13.5 H11" fill="none" stroke="#7b7f88" stroke-width="1.5" stroke-linecap="round"/></svg>
<div class="a" style="left:0;top:0;width:1936px;height:8px;background:#000"></div>
<div class="a" style="left:0;top:0;width:8px;height:1058px;background:#000"></div>
<div class="a" style="left:1928px;top:0;width:8px;height:1058px;background:#000"></div>
<div class="a" style="left:0;top:1050px;width:1936px;height:8px;background:#000"></div>
</body></html>
